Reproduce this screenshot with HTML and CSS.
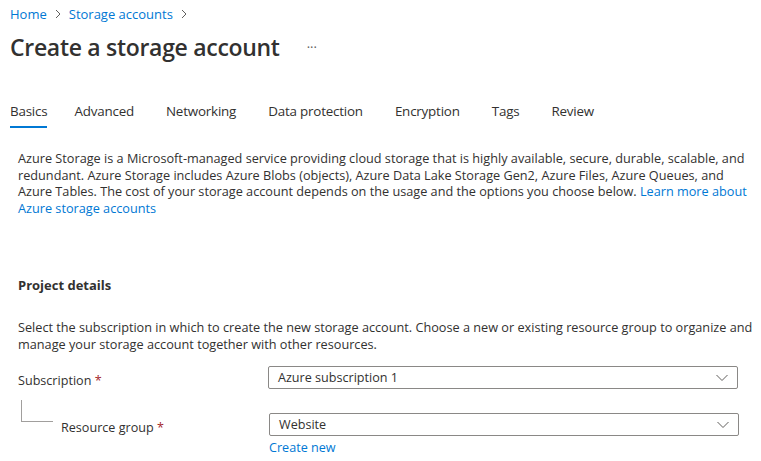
FILE: index.html
```html
<!DOCTYPE html>
<html lang="en">
<head>
<meta charset="utf-8">
<title>Create a storage account</title>
<link rel="stylesheet" href="styles.css">
</head>
<body>
<div class="page">
  <nav class="breadcrumb">
    <a class="crumb" href="#">Home</a>
    <svg class="chev" width="8" height="10" viewBox="0 0 8 10"><path d="M2 1l4 4-4 4" fill="none" stroke="#605e5c" stroke-width="1"/></svg>
    <a class="crumb" href="#">Storage accounts</a>
    <svg class="chev" width="8" height="10" viewBox="0 0 8 10"><path d="M2 1l4 4-4 4" fill="none" stroke="#605e5c" stroke-width="1"/></svg>
  </nav>
  <header class="title-row">
    <h1 class="title">Create a storage account</h1>
    <span class="more">···</span>
  </header>
  <div class="tabs">
    <span class="tab active">Basics</span>
    <span class="tab">Advanced</span>
    <span class="tab">Networking</span>
    <span class="tab">Data protection</span>
    <span class="tab">Encryption</span>
    <span class="tab">Tags</span>
    <span class="tab">Review</span>
  </div>
  <section class="content">
    <p class="desc first">Azure Storage is a Microsoft-managed service providing cloud storage that is highly available, secure, durable, scalable, and redundant. Azure Storage includes Azure Blobs (objects), Azure Data Lake Storage Gen2, Azure Files, Azure Queues, and Azure Tables. The cost of your storage account depends on the usage and the options you choose below. <a href="#" class="link">Learn more about Azure storage accounts</a></p>
    <h2 class="section-title">Project details</h2>
    <p class="desc">Select the subscription in which to create the new storage account. Choose a new or existing resource group to organize and manage your storage account together with other resources.</p>
    <div class="field">
      <label class="label">Subscription <span class="req">*</span></label>
      <div class="select"><span>Azure subscription 1</span>
        <svg width="12" height="8" viewBox="0 0 12 8"><path d="M0.5 1l5.5 5.5 5.5-5.5" fill="none" stroke="#605e5c" stroke-width="1"/></svg>
      </div>
    </div>
    <div class="field sub">
      <div class="sublabel"><span class="tree"></span><span class="sublabel-text">Resource group <span class="req">*</span></span></div>
      <div class="control">
        <div class="select"><span>Website</span>
          <svg width="12" height="8" viewBox="0 0 12 8"><path d="M0.5 1l5.5 5.5 5.5-5.5" fill="none" stroke="#605e5c" stroke-width="1"/></svg>
        </div>
        <a href="#" class="link create">Create new</a>
      </div>
    </div>
  </section>
</div>
</body>
</html>
```
FILE: styles.css
```css
* { box-sizing: border-box; }
html, body { margin: 0; padding: 0; background: #fff; }
body {
  font-family: "Open Sans", "Noto Sans", sans-serif;
  color: #323130;
  font-size: 12.6px;
}
a { text-decoration: none; }
.page { padding: 0 0 0 10px; width: 761px; overflow: hidden; }
.breadcrumb {
  display: flex; align-items: center; gap: 7px;
  height: 27px;
}
.crumb { color: #0078d4; font-size: 13px; }
.chev { margin-top: 1px; }
.title-row { display: flex; align-items: center; height: 40px; }
.title { margin: 0; font-size: 23px; font-weight: 600; letter-spacing: -0.3px; color: #323130; }
.more { margin-left: 27px; font-size: 13px; color: #605e5c; margin-top: -1px; }
.tabs {
  display: flex; margin-top: 34px; height: 27px;
}
.tab {
  font-size: 13.4px; color: #323130; margin-right: 32px;
  padding-bottom: 2px; line-height: 20px; letter-spacing: -0.2px;
}
.tab.active { margin-right: 27px; border-bottom: 2px solid #0078d4; }
.content { padding-left: 8px; width: 746px; }
.desc {
  margin: 0; line-height: 16.7px; font-size: 12.7px;
}
.desc.first { margin-top: 22px; }
.link { color: #0078d4; }
.section-title { margin: 59px 0 25px; font-size: 13px; font-weight: 700; line-height: 18px; }
.field { display: flex; align-items: flex-start; margin-top: 14px; }
.label { width: 250px; line-height: 20px; padding-top: 5px; }
.req { color: #a4262c; }
.select {
  width: 470px; height: 23px; border: 1px solid #8a8886; border-radius: 2px;
  display: flex; align-items: center; justify-content: space-between;
  padding: 0 9px 0 9px; font-size: 12.6px;
}
.field.sub { margin-top: 22px; }
.sublabel { display: flex; align-items: flex-start; width: 251px; }
.tree {
  width: 32px; height: 22px; margin-left: 3px; margin-top: -13px;
  border-left: 1px solid #a19f9d; border-bottom: 1px solid #a19f9d;
}
.sublabel-text { margin-left: 8px; padding-top: 5px; line-height: 20px; }
.control { display: flex; flex-direction: column; }
.create { margin-top: 3px; line-height: 18px; }
```
